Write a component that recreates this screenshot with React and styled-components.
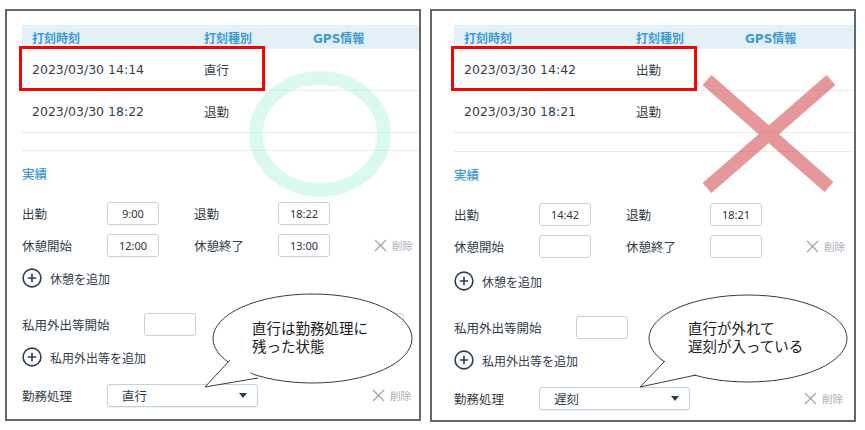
import styled, { createGlobalStyle } from "styled-components";

const GlobalStyle = createGlobalStyle`
  body {
    margin: 0;
    background: #fff;
    font-family: "Noto Sans CJK JP", sans-serif;
  }
`;

const panels = [
  {
    id: "before",
    width: 416,
    height: 412,
    padLeft: 15,
    extra: 0,
    punches: [
      { time: "2023/03/30 14:14", kind: "直行" },
      { time: "2023/03/30 18:22", kind: "退勤" },
    ],
    start: "9:00",
    end: "18:22",
    breakStart: "12:00",
    breakEnd: "13:00",
    process: "直行",
    mark: "ring",
    note: "直行は勤務処理に\n残った状態",
    bubble: {
      left: 193,
      top: 279,
      cx: 112.5,
      cy: 48.5,
      rx: 99.5,
      ry: 44.5,
      tail: "30,70 5,97 58,88",
      textLeft: 245,
      textTop: 308,
    },
  },
  {
    id: "after",
    width: 426,
    height: 413,
    padLeft: 22,
    extra: 1,
    punches: [
      { time: "2023/03/30 14:42", kind: "出勤" },
      { time: "2023/03/30 18:21", kind: "退勤" },
    ],
    start: "14:42",
    end: "18:21",
    breakStart: "",
    breakEnd: "",
    process: "遅刻",
    mark: "cross",
    note: "直行が外れて\n遅刻が入っている",
    bubble: {
      left: 204,
      top: 279,
      cx: 112,
      cy: 48.5,
      rx: 99,
      ry: 43.5,
      tail: "29,71 4,97 60,85",
      textLeft: 256,
      textTop: 308,
    },
  },
];

const CrossIcon = ({ size = 13 }) => (
  <svg width={size} height={size} viewBox="0 0 13 13">
    <path d="M1 1 L12 12 M12 1 L1 12" stroke="#98a4b0" strokeWidth="1.2" fill="none" />
  </svg>
);

const PlusCircle = () => (
  <svg width="20" height="20" viewBox="0 0 20 20">
    <circle cx="10" cy="10" r="8.9" stroke="#2c3b4e" strokeWidth="1.6" fill="none" />
    <path d="M10 5.8 V14.2 M5.8 10 H14.2" stroke="#2c3b4e" strokeWidth="1.6" />
  </svg>
);

const Caret = () => (
  <svg width="8" height="5" viewBox="0 0 8 5">
    <polygon points="0,0 8,0 4,5" fill="#2c3b4e" />
  </svg>
);

const Ring = () => (
  <RingMark width="142" height="126" viewBox="0 0 142 126">
    <ellipse cx="71" cy="63" rx="64" ry="56" stroke="rgba(160,240,220,0.4)" strokeWidth="13.5" fill="none" />
  </RingMark>
);

const Cross = () => (
  <CrossMark width="140" height="130" viewBox="0 0 140 130">
    <path
      d="M7 10 L129 117 M131 10 L7 118"
      stroke="rgba(205,55,60,0.52)"
      strokeWidth="13.5"
      fill="none"
    />
  </CrossMark>
);

const Callout = ({ bubble, text }) => (
  <>
    <BubbleShape
      style={{ left: bubble.left, top: bubble.top }}
      width="216"
      height="102"
      viewBox="0 0 216 102"
    >
      <ellipse
        cx={bubble.cx}
        cy={bubble.cy}
        rx={bubble.rx}
        ry={bubble.ry}
        fill="#fff"
        stroke="#3a3a3a"
        strokeWidth="1"
      />
      <polyline points={bubble.tail} fill="#fff" stroke="#3a3a3a" strokeWidth="1" />
    </BubbleShape>
    <BubbleText style={{ left: bubble.textLeft, top: bubble.textTop }}>{text}</BubbleText>
  </>
);

const Delete = () => (
  <DeleteLink>
    <CrossIcon />
    <span>削除</span>
  </DeleteLink>
);

const Panel = ({ data }) => (
  <PanelBox $width={data.width} $height={data.height} $pad={data.padLeft}>
    <Table>
      <HeadRow>
        <span>打刻時刻</span>
        <span>打刻種別</span>
        <span>GPS情報</span>
      </HeadRow>
      {data.punches.map((p) => (
        <Row key={p.time}>
          <span>{p.time}</span>
          <span>{p.kind}</span>
          <span />
        </Row>
      ))}
      <Highlight />
    </Table>
    <Divider $extra={data.extra} />

    <SectionTitle>実績</SectionTitle>

    <FieldRow $cols="85px 87px 84px 96px auto" $top={18}>
      <Label>出勤</Label>
      <TimeBox readOnly value={data.start} />
      <Label>退勤</Label>
      <TimeBox readOnly value={data.end} />
    </FieldRow>
    <FieldRow $cols="85px 87px 84px 96px auto" $top={9}>
      <Label>休憩開始</Label>
      <TimeBox readOnly value={data.breakStart} />
      <Label>休憩終了</Label>
      <TimeBox readOnly value={data.breakEnd} />
      <Delete />
    </FieldRow>
    <AddRow $top={11 + data.extra * 2}>
      <PlusCircle />
      <span>休憩を追加</span>
    </AddRow>

    <FieldRow $cols="122px 208px 52px" $top={25}>
      <Label>私用外出等開始</Label>
      <TimeBox readOnly value="" />
      <TimeBox readOnly value="" />
    </FieldRow>
    <AddRow $top={11}>
      <PlusCircle />
      <span>私用外出等を追加</span>
    </AddRow>

    <FieldRow $cols="85px 265px auto" $top={17}>
      <Label>勤務処理</Label>
      <Select>
        <span>{data.process}</span>
        <Caret />
      </Select>
      <Delete />
    </FieldRow>

    {data.mark === "ring" ? <Ring /> : <Cross />}
    <Callout bubble={data.bubble} text={data.note} />
  </PanelBox>
);

export default function App() {
  return (
    <>
      <GlobalStyle />
      <Page>
        {panels.map((p) => (
          <Panel key={p.id} data={p} />
        ))}
      </Page>
    </>
  );
}

const Page = styled.div`
  display: flex;
  gap: 9px;
  padding: 9px 0 0 5px;
`;

const PanelBox = styled.section`
  position: relative;
  box-sizing: border-box;
  width: ${(p) => p.$width}px;
  height: ${(p) => p.$height}px;
  border: 2px solid #666;
  padding: 14px 0 0 ${(p) => p.$pad}px;
  overflow: hidden;
  display: flex;
  flex-direction: column;
`;

const Table = styled.div`
  position: relative;
  font-family: "DejaVu Sans", "Noto Sans CJK JP", sans-serif;
`;

const HeadRow = styled.div`
  display: grid;
  grid-template-columns: 172px 109px 1fr;
  align-items: center;
  height: 24px;
  padding-left: 10px;
  background: #e2f0f8;
  color: #3d9ad0;
  font-size: 12px;
  font-weight: bold;
`;

const Row = styled.div`
  display: grid;
  grid-template-columns: 172px 109px 1fr;
  align-items: center;
  height: 41px;
  padding-left: 10px;
  border-bottom: 1px solid #ececec;
  color: #36404c;
  font-size: 12.5px;
`;

const Highlight = styled.div`
  position: absolute;
  left: -3px;
  top: 21px;
  width: 246px;
  height: 45px;
  box-sizing: border-box;
  border: 3px solid #f00;
`;

const Divider = styled.div`
  margin-top: ${(p) => 17 + p.$extra}px;
  border-top: 1px solid #ececec;
`;

const SectionTitle = styled.div`
  margin-top: 13px;
  height: 20px;
  line-height: 20px;
  font-size: 12.5px;
  font-weight: 500;
  color: #3b97ce;
`;

const FieldRow = styled.div`
  display: grid;
  grid-template-columns: ${(p) => p.$cols};
  align-items: center;
  height: 23px;
  margin-top: ${(p) => p.$top}px;
`;

const Label = styled.span`
  font-size: 12.5px;
  color: #333d4a;
  white-space: nowrap;
`;

const TimeBox = styled.input`
  box-sizing: border-box;
  width: 52px;
  height: 23px;
  margin: 0;
  padding: 0;
  border: 1px solid #cfcfcf;
  border-radius: 3px;
  background: #fff;
  text-align: center;
  font-family: "Noto Sans", sans-serif;
  font-size: 11px;
  color: #2c3440;
  outline: none;
`;

const DeleteLink = styled.span`
  display: inline-flex;
  align-items: center;
  gap: 5px;
  font-size: 10.5px;
  color: #a5aeb8;
`;

const AddRow = styled.div`
  display: flex;
  align-items: center;
  gap: 8px;
  height: 20px;
  margin-top: ${(p) => p.$top}px;
  font-size: 12px;
  color: #333d4a;
`;

const Select = styled.div`
  box-sizing: border-box;
  display: flex;
  align-items: center;
  justify-content: space-between;
  width: 151px;
  height: 23px;
  padding: 0 10px 0 14px;
  border: 1px solid #bdd3e2;
  border-radius: 3px;
  box-shadow: 0 1px 1px rgba(120, 150, 180, 0.15);
  font-size: 12.5px;
  color: #333d4a;
`;

const RingMark = styled.svg`
  position: absolute;
  left: 242px;
  top: 60px;
`;

const CrossMark = styled.svg`
  position: absolute;
  left: 268px;
  top: 59px;
`;

const BubbleShape = styled.svg`
  position: absolute;
`;

const BubbleText = styled.div`
  position: absolute;
  font-size: 14.5px;
  line-height: 18px;
  color: #1c1c1c;
  white-space: pre;
`;
